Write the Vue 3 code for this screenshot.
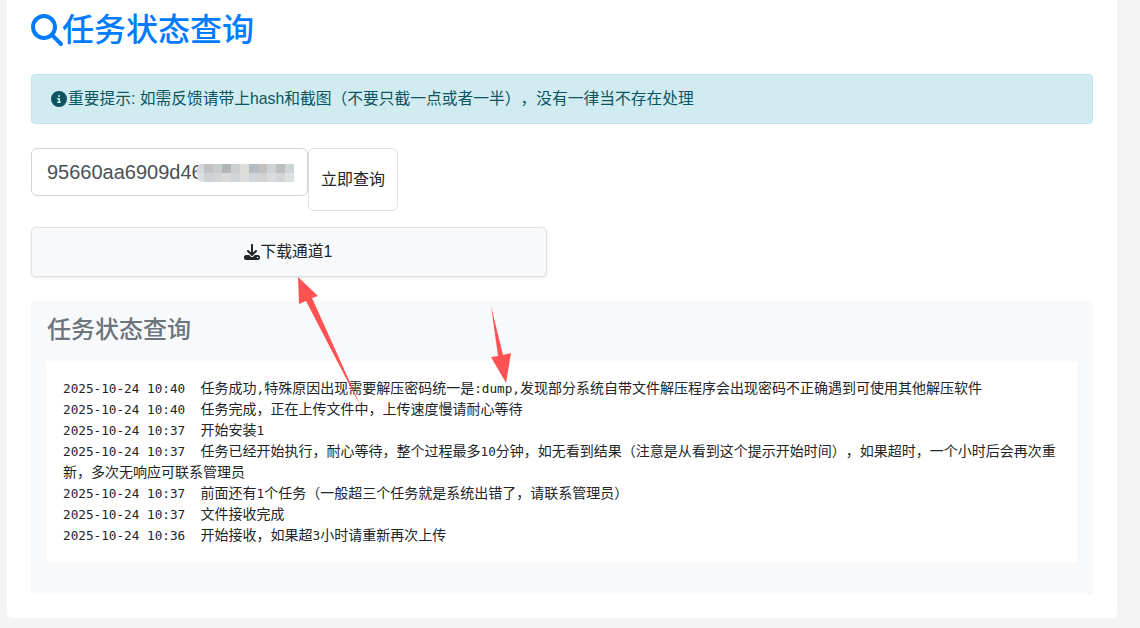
<script setup>
const mosaicRows = [
  ['#d6d8d9', '#bfc1c3', '#c9cccc', '#b0b5b7', '#ccd0d3', '#dcdcd8', '#b3bcc3', '#c3c0bd', '#cdd3d7', '#bcbfc0', '#cfd4d6'],
  ['#dcdedf', '#cfd2d4', '#d2d5d6', '#d7d9da', '#d2d5d8', '#dcdddb', '#cfd5da', '#d5d3d1', '#d8dcdf', '#d2d4d5', '#dde0e1'],
]
const mosaic = mosaicRows.flat()

const logs = [
  ['2025-10-24 10:40', '任务成功,特殊原因出现需要解压密码统一是:dump,发现部分系统自带文件解压程序会出现密码不正确遇到可使用其他解压软件'],
  ['2025-10-24 10:40', '任务完成，正在上传文件中，上传速度慢请耐心等待'],
  ['2025-10-24 10:37', '开始安装1'],
  ['2025-10-24 10:37', '任务已经开始执行，耐心等待，整个过程最多10分钟，如无看到结果（注意是从看到这个提示开始时间），如果超时，一个小时后会再次重新，多次无响应可联系管理员'],
  ['2025-10-24 10:37', '前面还有1个任务（一般超三个任务就是系统出错了，请联系管理员）'],
  ['2025-10-24 10:37', '文件接收完成'],
  ['2025-10-24 10:36', '开始接收，如果超3小时请重新再次上传'],
]

const segments = (text) => text.match(/[\x00-\x7f]+|[^\x00-\x7f]+/g).map((t) => ({
  t,
  mono: /^[\x00-\x7f]/.test(t),
}))
</script>

<template>
  <div class="page">
    <main class="card">
      <h1 class="title">
        <svg class="title-icon" viewBox="0 0 512 512" fill="currentColor"><path d="M416 208c0 45.9-14.9 88.3-40 122.7L502.6 457.4c12.5 12.5 12.5 32.8 0 45.3s-32.8 12.5-45.3 0L330.7 376c-34.4 25.2-76.8 40-122.7 40C93.1 416 0 322.9 0 208S93.1 0 208 0S416 93.1 416 208zM208 352a144 144 0 1 0 0-288 144 144 0 1 0 0 288z"/></svg>
        <span class="title-text">任务状态查询</span>
      </h1>

      <div class="alert">
        <svg class="small-icon" viewBox="0 0 512 512" fill="currentColor"><path d="M256 512A256 256 0 1 0 256 0a256 256 0 1 0 0 512zM216 336h24V272H216c-13.3 0-24-10.7-24-24s10.7-24 24-24h48c13.3 0 24 10.7 24 24v88h8c13.3 0 24 10.7 24 24s-10.7 24-24 24H216c-13.3 0-24-10.7-24-24s10.7-24 24-24zm40-208a32 32 0 1 1 0 64 32 32 0 1 1 0-64z"/></svg>
        <span>重要提示: 如需反馈请带上hash和截图（不要只截一点或者一半），没有一律当不存在处理</span>
      </div>

      <form class="query" @submit.prevent>
        <div class="input-wrap">
          <input class="hash-input" type="text" value="95660aa6909d466" />
          <div class="mosaic">
            <i v-for="(c, i) in mosaic" :key="i" :style="{ background: c }"></i>
          </div>
        </div>
        <button class="query-btn" type="submit">立即查询</button>
      </form>

      <button class="download" type="button">
        <svg class="small-icon" viewBox="0 0 512 512" fill="currentColor"><path d="M288 32c0-17.7-14.3-32-32-32s-32 14.3-32 32V274.7l-73.4-73.4c-12.5-12.5-32.8-12.5-45.3 0s-12.5 32.8 0 45.3l128 128c12.5 12.5 32.8 12.5 45.3 0l128-128c12.5-12.5 12.5-32.8 0-45.3s-32.8-12.5-45.3 0L288 274.7V32zM64 352c-35.3 0-64 28.7-64 64v32c0 35.3 28.7 64 64 64H448c35.3 0 64-28.7 64-64V416c0-35.3-28.7-64-64-64H346.5l-45.3 45.3c-25 25-65.5 25-90.5 0L165.5 352H64zm368 56a24 24 0 1 1 0 48 24 24 0 1 1 0-48z"/></svg>
        <span>下载通道1</span>
      </button>

      <section class="status">
        <h2 class="status-title">任务状态查询</h2>
        <div class="log">
          <div v-for="(row, i) in logs" :key="i" class="log-line"><span class="mono stamp">{{ row[0] + '\u00a0\u00a0' }}</span><span
            v-for="(s, j) in segments(row[1])" :key="j" :class="{ mono: s.mono }">{{ s.t }}</span></div>
        </div>
      </section>
    </main>

    <svg class="arrows" viewBox="0 0 1140 628" width="1140" height="628">
      <polygon fill="#ff5252" points="298,277 318,296 312,298 362,409 306,301 299,304" />
      <polygon fill="#ff5252" points="506,383 491,357 498,356 491,306 503,355 511,353" />
    </svg>
  </div>
</template>

<style>
html, body {
  margin: 0;
  background: #f4f4f4;
  overflow: hidden;
}
</style>

<style scoped>
.page {
  position: relative;
  width: 1140px;
  height: 628px;
  overflow: hidden;
  box-sizing: border-box;
  padding: 0 23px 0 7px;
  font-family: "Liberation Sans", "Noto Sans CJK SC", sans-serif;
  font-size: 15.75px;
  line-height: 24px;
  color: #212529;
  text-spacing-trim: space-all;
}
.card {
  background: #fff;
  padding: 11px 24px 24px;
  border-radius: 0 0 5px 5px;
}
.title {
  display: flex;
  align-items: center;
  margin: 0 0 25px;
  font-size: 32px;
  line-height: 38px;
  font-weight: 500;
  color: #007bff;
}
.title-icon {
  width: 32px;
  height: 32px;
  flex: none;
}
.title-text {
  margin-left: -1px;
}
.alert {
  display: flex;
  align-items: center;
  padding: 12px 19px;
  background: #d1ecf1;
  border: 1px solid #bee5eb;
  border-radius: 4px;
  color: #0c5460;
  margin-bottom: 24px;
}
.small-icon {
  width: 16px;
  height: 16px;
  flex: none;
  margin-right: 1px;
}
.query {
  display: flex;
  align-items: flex-start;
  margin-bottom: 16px;
}
.input-wrap {
  position: relative;
  width: 277px;
  height: 48px;
}
.hash-input {
  box-sizing: border-box;
  width: 100%;
  height: 100%;
  padding: 8px 15px;
  border: 1px solid #ced4da;
  border-radius: 6px;
  font: inherit;
  font-size: 20px;
  color: #495057;
  background: #fff;
  outline: none;
}
.mosaic {
  position: absolute;
  left: 166px;
  top: 16px;
  display: grid;
  grid-template-columns: 7px repeat(10, 9px);
  grid-auto-rows: 9px;
  border-radius: 5px 0 0 6px;
  overflow: hidden;
  filter: blur(0.3px);
}
.query-btn {
  box-sizing: border-box;
  width: 90px;
  height: 63px;
  padding: 0 12px;
  border: 1px solid #dee2e6;
  border-radius: 6px;
  background: #fff;
  font: inherit;
  font-size: 16px;
  color: #212529;
}
.download {
  display: flex;
  align-items: center;
  justify-content: center;
  box-sizing: border-box;
  width: 516px;
  height: 50px;
  padding: 0 2px 0 0;
  border: 1px solid #dee2e6;
  border-radius: 5px;
  background: #f8f9fa;
  box-shadow: 0 1px 3px rgba(0, 0, 0, 0.1);
  font: inherit;
  color: #212529;
}
.status {
  margin-top: 24px;
  padding: 16px;
  background: #f8f9fa;
}
.status-title {
  margin: 0 0 19px;
  font-size: 24px;
  line-height: 26px;
  font-weight: 500;
  color: #6c757d;
}
.log {
  margin-bottom: 16px;
  padding: 16px;
  background: #fff;
  font-size: 14px;
  line-height: 21px;
  white-space: pre-wrap;
  word-break: break-all;
  color: #212529;
}
.mono {
  font-family: "DejaVu Sans Mono", "Noto Sans CJK SC", monospace;
  font-size: 12.7px;
}
.arrows {
  position: absolute;
  left: 0;
  top: 0;
  pointer-events: none;
}
</style>
